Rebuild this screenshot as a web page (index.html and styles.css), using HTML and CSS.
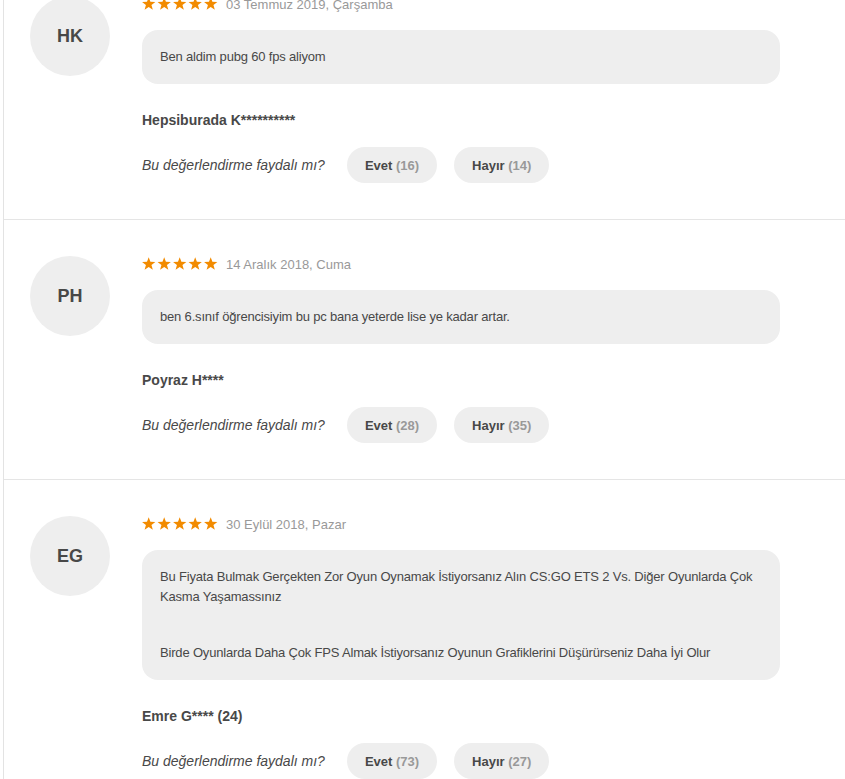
FILE: index.html
```html
<!DOCTYPE html>
<html lang="tr">
<head>
<meta charset="utf-8">
<title>Değerlendirmeler</title>
<link rel="stylesheet" href="styles.css">
</head>
<body>
<svg width="0" height="0" class="defs" aria-hidden="true">
  <defs>
    <path id="star" d="M0,-7 L1.7,-2.35 L6.66,-2.16 L2.76,0.9 L4.11,5.66 L0,2.9 L-4.11,5.66 L-2.76,0.9 L-6.66,-2.16 L-1.7,-2.35 Z"/>
  </defs>
</svg>
<div class="reviews">
  <div class="review">
    <div class="avatar">HK</div>
    <div class="content">
      <div class="meta">
        <svg class="stars" viewBox="0 0 76 14"><use href="#star" x="6.7" y="7.2"/><use href="#star" x="22.2" y="7.2"/><use href="#star" x="37.7" y="7.2"/><use href="#star" x="53.2" y="7.2"/><use href="#star" x="68.7" y="7.2"/></svg>
        <span class="date">03 Temmuz 2019, Çarşamba</span>
      </div>
      <div class="bubble"><p>Ben aldim pubg 60 fps aliyom</p></div>
      <div class="author">Hepsiburada K**********</div>
      <div class="helpful">
        <span class="question">Bu değerlendirme faydalı mı?</span>
        <button class="vote">Evet <span class="count">(16)</span></button>
        <button class="vote">Hayır <span class="count">(14)</span></button>
      </div>
    </div>
  </div>
  <div class="review">
    <div class="avatar">PH</div>
    <div class="content">
      <div class="meta">
        <svg class="stars" viewBox="0 0 76 14"><use href="#star" x="6.7" y="7.2"/><use href="#star" x="22.2" y="7.2"/><use href="#star" x="37.7" y="7.2"/><use href="#star" x="53.2" y="7.2"/><use href="#star" x="68.7" y="7.2"/></svg>
        <span class="date">14 Aralık 2018, Cuma</span>
      </div>
      <div class="bubble"><p>ben 6.sınıf öğrencisiyim bu pc bana yeterde lise ye kadar artar.</p></div>
      <div class="author">Poyraz H****</div>
      <div class="helpful">
        <span class="question">Bu değerlendirme faydalı mı?</span>
        <button class="vote">Evet <span class="count">(28)</span></button>
        <button class="vote">Hayır <span class="count">(35)</span></button>
      </div>
    </div>
  </div>
  <div class="review">
    <div class="avatar">EG</div>
    <div class="content">
      <div class="meta">
        <svg class="stars" viewBox="0 0 76 14"><use href="#star" x="6.7" y="7.2"/><use href="#star" x="22.2" y="7.2"/><use href="#star" x="37.7" y="7.2"/><use href="#star" x="53.2" y="7.2"/><use href="#star" x="68.7" y="7.2"/></svg>
        <span class="date">30 Eylül 2018, Pazar</span>
      </div>
      <div class="bubble">
        <p>Bu Fiyata Bulmak Gerçekten Zor Oyun Oynamak İstiyorsanız Alın CS:GO ETS 2 Vs. Diğer Oyunlarda Çok Kasma Yaşamassınız</p>
        <p>Birde Oyunlarda Daha Çok FPS Almak İstiyorsanız Oyunun Grafiklerini Düşürürseniz Daha İyi Olur</p>
      </div>
      <div class="author">Emre G**** (24)</div>
      <div class="helpful">
        <span class="question">Bu değerlendirme faydalı mı?</span>
        <button class="vote">Evet <span class="count">(73)</span></button>
        <button class="vote">Hayır <span class="count">(27)</span></button>
      </div>
    </div>
  </div>
</div>
</body>
</html>
```

FILE: styles.css
```css
html, body {
  margin: 0;
  padding: 0;
  background: #fff;
  overflow: hidden;
}

body {
  font-family: "Liberation Sans", Arial, sans-serif;
  color: #484848;
}

.defs {
  position: absolute;
  width: 0;
  height: 0;
}

.reviews {
  margin: -40px 0 0 3px;
  width: 900px;
  border-left: 1px solid #e3e3e3;
}

.review {
  display: flex;
  align-items: flex-start;
  padding: 36px 0 36px 26px;
  border-bottom: 1px solid #e5e5e5;
}

.avatar {
  flex: 0 0 80px;
  height: 80px;
  margin-right: 32px;
  border-radius: 50%;
  background: #eeeeee;
  display: flex;
  align-items: center;
  justify-content: center;
  font-size: 18px;
  font-weight: bold;
  color: #484848;
}

.content {
  width: 638px;
}

.meta {
  display: flex;
  align-items: center;
  height: 16px;
}

.stars {
  width: 76px;
  height: 14px;
  margin-right: 8px;
  fill: #f28b00;
}

.date {
  font-size: 13px;
  color: #999999;
}

.bubble {
  margin-top: 18px;
  padding: 17px 18px 17px;
  background: #eeeeee;
  border-radius: 16px;
  font-size: 13px;
  letter-spacing: -0.18px;
  line-height: 20px;
  color: #484848;
}

.bubble p {
  margin: 0;
}

.bubble p + p {
  margin-top: 36px;
}

.author {
  margin-top: 26px;
  font-size: 14px;
  font-weight: bold;
  line-height: 20px;
}

.helpful {
  margin-top: 17px;
  display: flex;
  align-items: center;
}

.question {
  font-size: 14px;
  font-style: italic;
  margin-right: 22px;
}

.vote {
  height: 36px;
  padding: 0 18px;
  margin-right: 17px;
  border: 0;
  border-radius: 18px;
  background: #eeeeee;
  font: bold 13px "Liberation Sans", Arial, sans-serif;
  color: #484848;
}

.count {
  color: #999999;
}
```
